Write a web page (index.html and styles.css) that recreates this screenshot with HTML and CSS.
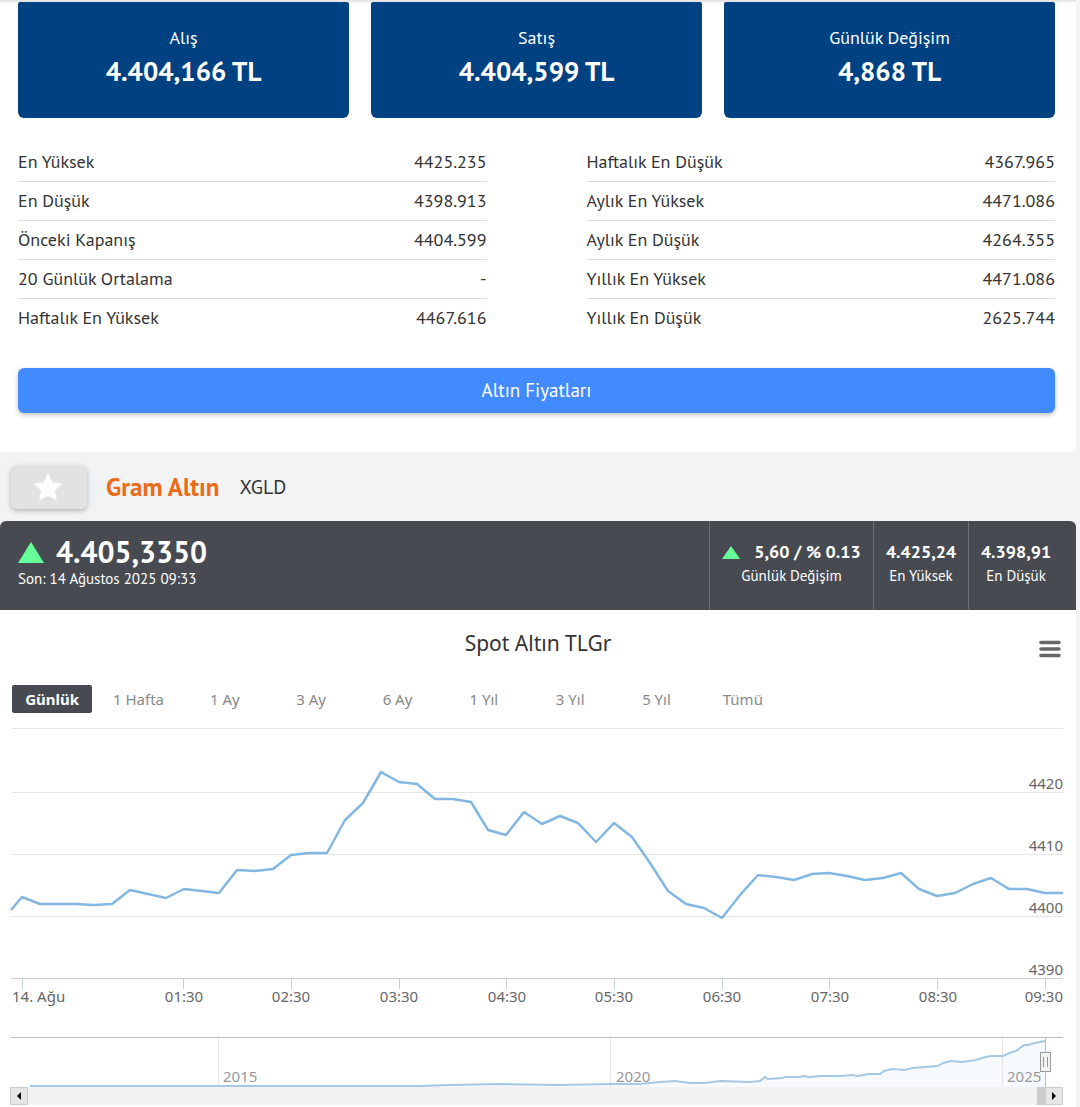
FILE: index.html
```html
<!DOCTYPE html>
<html lang="tr">
<head>
    <meta charset="UTF-8">
    <meta name="viewport" content="width=device-width, initial-scale=1.0">
    <title>Gram Altın</title>
    <link rel="stylesheet" href="styles.css">
</head>
<body>
    <section class="summary">
        <div class="cards">
            <div class="card">
                <span class="card-label">Alış</span>
                <strong class="card-value">4.404,166 TL</strong>
            </div>
            <div class="card">
                <span class="card-label">Satış</span>
                <strong class="card-value">4.404,599 TL</strong>
            </div>
            <div class="card">
                <span class="card-label">Günlük Değişim</span>
                <strong class="card-value">4,868 TL</strong>
            </div>
        </div>

        <div class="stats">
            <table class="stats-table">
                <tr><th scope="row">En Yüksek</th><td>4425.235</td></tr>
                <tr><th scope="row">En Düşük</th><td>4398.913</td></tr>
                <tr><th scope="row">Önceki Kapanış</th><td>4404.599</td></tr>
                <tr><th scope="row">20 Günlük Ortalama</th><td>-</td></tr>
                <tr><th scope="row">Haftalık En Yüksek</th><td>4467.616</td></tr>
            </table>
            <table class="stats-table">
                <tr><th scope="row">Haftalık En Düşük</th><td>4367.965</td></tr>
                <tr><th scope="row">Aylık En Yüksek</th><td>4471.086</td></tr>
                <tr><th scope="row">Aylık En Düşük</th><td>4264.355</td></tr>
                <tr><th scope="row">Yıllık En Yüksek</th><td>4471.086</td></tr>
                <tr><th scope="row">Yıllık En Düşük</th><td>2625.744</td></tr>
            </table>
        </div>

        <a class="prices-link" href="#">Altın Fiyatları</a>
    </section>

    <header class="symbol">
        <button class="favorite" type="button" aria-label="Favorilere ekle">
            <svg width="30" height="28" viewBox="0 0 30 28">
                <path d="M14 0l4.3 9.2 9.9 1.3-7.3 6.9 1.9 9.9-8.8-4.9-8.8 4.9 1.9-9.9-7.3-6.9 9.9-1.3z" fill="#fff"/>
            </svg>
        </button>
        <h1 class="symbol-name">Gram Altın</h1>
        <span class="symbol-code">XGLD</span>
    </header>

    <section class="quote">
        <div class="quote-main">
            <div class="quote-price">
                <svg class="arrow-up" width="26" height="21" viewBox="0 0 26 21"><path d="M13 0l13 21H0z"/></svg>
                <strong>4.405,3350</strong>
            </div>
            <span class="quote-time">Son: 14 Ağustos 2025 09:33</span>
        </div>
        <div class="quote-cell quote-change">
            <div class="quote-row">
                <svg class="arrow-up" width="18" height="13" viewBox="0 0 18 13"><path d="M9 0l9 13H0z"/></svg>
                <strong>5,60 / % 0.13</strong>
            </div>
            <span>Günlük Değişim</span>
        </div>
        <div class="quote-cell">
            <strong>4.425,24</strong>
            <span>En Yüksek</span>
        </div>
        <div class="quote-cell">
            <strong>4.398,91</strong>
            <span>En Düşük</span>
        </div>
    </section>

    <section class="chart">
        <h2 class="chart-title">Spot Altın TLGr</h2>
        <button class="chart-menu" type="button" aria-label="Grafik menüsü">
            <svg width="22" height="18" viewBox="0 0 22 18">
                <path d="M2 2.5h18M2 9h18M2 15.5h18" stroke="#666" stroke-width="3.6" stroke-linecap="round"/>
            </svg>
        </button>

        <div class="ranges">
            <button class="range active" type="button">Günlük</button>
            <button class="range" type="button">1 Hafta</button>
            <button class="range" type="button">1 Ay</button>
            <button class="range" type="button">3 Ay</button>
            <button class="range" type="button">6 Ay</button>
            <button class="range" type="button">1 Yıl</button>
            <button class="range" type="button">3 Yıl</button>
            <button class="range" type="button">5 Yıl</button>
            <button class="range" type="button">Tümü</button>
        </div>

        <svg class="plot" viewBox="0 0 1076 367">
            <path class="grid" d="M11 8.5H1063M11 72.5H1063M11 134.5H1063M11 196.5H1063"/>
            <path class="axis" d="M11 258.5H1063M22.5 258v11M183.5 258v11M291.5 258v11M399.5 258v11M506.5 258v11M614.5 258v11M722.5 258v11M829.5 258v11M937.5 258v11M1045.5 258v11"/>

            <polyline class="series" points="11,190 22,177 40,184 58,184 76,184 94,185 112,184 130,170 148,174 166,178 184,169 202,171 219,173 237,150 255,151 273,149 291,135 309,133 327,133 345,100 363,83 381,52 399,62 417,64 435,79 453,79 471,82 488,110 506,115 524,92 542,104 560,96 578,103 596,122 614,103 632,117 650,143 668,171 686,184 704,188 722,198 740,175 758,155 776,157 794,160 812,154 829,153 847,156 865,160 883,158 901,153 919,169 937,176 955,173 973,164 991,158 1009,169 1027,169 1045,173 1063,173"/>

            <g class="label label-end">
                <text x="1063" y="69">4420</text>
                <text x="1063" y="131">4410</text>
                <text x="1063" y="193">4400</text>
                <text x="1063" y="255">4390</text>
                <text x="1063" y="282">09:30</text>
            </g>
            <text class="label" x="12" y="282">14. Ağu</text>
            <g class="label label-middle">
                <text x="184" y="282">01:30</text>
                <text x="291" y="282">02:30</text>
                <text x="399" y="282">03:30</text>
                <text x="507" y="282">04:30</text>
                <text x="614" y="282">05:30</text>
                <text x="722" y="282">06:30</text>
                <text x="830" y="282">07:30</text>
                <text x="938" y="282">08:30</text>
            </g>

            <!-- navigator -->
            <path class="nav-area" d="M30 366L360 366 500 365 612 364 640 364 675 361 705 363 720 362 750 362 760 361 765 358 785 358 803 356 840 356 880 354 892 349 905 350 938 345 951 341 962 342 990 336 1003 336 1024 325 1035 323 1045 321V367H30z"/>
            <path class="nav-grid" d="M218.5 318v49M610.5 318v49M1002.5 318v49"/>
            <polyline class="nav-series" points="30,366 120,366 210,366 300,366 420,366 450,365 500,364 560,365 612,364 640,364 660,362 675,361 690,363 705,363 720,361 750,362 760,361 765,357 768,359 782,358 785,357 800,357 803,356 810,357 820,356 840,356 852,355 858,356 869,354 880,354 884,351 892,349 905,350 912,348 938,346 943,343 951,341 962,342 976,340 982,338 990,336 1003,336 1012,332 1016,331 1024,325 1028,325 1035,323 1045,321"/>
            <path class="nav-outline" d="M11 317.5H1063M1045.5 317v50"/>
            <g class="label nav-label">
                <text x="223" y="362">2015</text>
                <text x="616" y="362">2020</text>
                <text x="1007" y="362">2025</text>
            </g>
            <rect class="nav-handle" x="1040.5" y="332.5" width="10" height="19"/>
            <path class="nav-grip" d="M1043.5 337v10M1047.5 337v10"/>
        </svg>

        <div class="scrollbar">
            <button class="scroll-button" type="button" aria-label="Geri">
                <svg width="4" height="8" viewBox="0 0 4 8"><path d="M4 0v8L0 4z"/></svg>
            </button>
            <div class="scroll-track"><div class="scroll-thumb"></div></div>
            <button class="scroll-button" type="button" aria-label="İleri">
                <svg width="4" height="8" viewBox="0 0 4 8"><path d="M0 0v8l4-4z"/></svg>
            </button>
        </div>
    </section>
</body>
</html>
```

FILE: styles.css
```css
* {
    box-sizing: border-box;
}
body {
    margin: 0;
    padding-right: 4px;
    background-color: #f2f3f5;
    font-family: "PT Sans", Lato, sans-serif;
    color: #333;
}
button {
    border: none;
    padding: 0;
    font-family: inherit;
    cursor: pointer;
}

/* Price summary */
.summary {
    background-color: white;
    border-top: 2px solid #e6e6e6;
    border-radius: 0 0 6px 0;
    padding: 0 21px 39px 18px;
}
.cards {
    display: flex;
    gap: 22px;
}
.card {
    flex: 1;
    display: flex;
    flex-direction: column;
    align-items: center;
    height: 116px;
    padding-top: 24px;
    background-color: #004182;
    border-radius: 2px 2px 6px 6px;
    color: white;
}
.card-label {
    font-size: 18px;
    line-height: 24px;
}
.card-value {
    font-size: 27px;
    line-height: 42px;
}
.stats {
    display: flex;
    gap: 100px;
    margin-top: 24px;
}
.stats-table {
    flex: 1;
    border-collapse: collapse;
    font-size: 18px;
}
.stats-table th,
.stats-table td {
    height: 39px;
    padding: 0;
    border-bottom: 1px solid #ddd;
    font-weight: normal;
    text-align: left;
}
.stats-table td {
    text-align: right;
}
.stats-table tr:last-child > * {
    border-bottom: none;
}
.prices-link {
    display: block;
    margin-top: 31px;
    background-color: #428bff;
    border-radius: 6px;
    box-shadow: 0 2px 5px rgba(0, 0, 0, 0.25);
    color: white;
    font-size: 19px;
    line-height: 45px;
    text-align: center;
    text-decoration: none;
}

/* Symbol heading */
.symbol {
    display: flex;
    align-items: center;
    height: 69px;
    padding-left: 11px;
}
.favorite {
    display: flex;
    align-items: center;
    justify-content: center;
    width: 76px;
    height: 44px;
    background-color: #e2e2e2;
    border-radius: 6px;
    box-shadow: 0 2px 5px rgba(0, 0, 0, 0.25);
}
.symbol-name {
    margin: 0 20px 0 19px;
    color: #eb6b18;
    font-size: 25px;
}
.symbol-code {
    font-size: 20px;
}

/* Quote bar */
.quote {
    display: flex;
    height: 89px;
    padding-right: 13px;
    background-color: #474b51;
    border-radius: 6px 6px 0 0;
    color: white;
    font-size: 15px;
}
.quote-main {
    flex: 1;
    padding: 14px 0 0 18px;
}
.quote-price {
    display: flex;
    align-items: center;
    gap: 12px;
    font-size: 30px;
    line-height: 34px;
}
.quote-time {
    line-height: 20px;
}
.quote-cell {
    display: flex;
    flex-direction: column;
    align-items: center;
    width: 95px;
    padding-top: 19px;
    border-left: 1px solid #6c7075;
    line-height: 24px;
}
.quote-cell strong {
    font-size: 18px;
}
.quote-change {
    width: 164px;
}
.quote-row {
    display: flex;
    align-items: center;
    gap: 14px;
}
.arrow-up {
    fill: #66ff99;
}

/* Chart */
.chart {
    position: relative;
    background-color: white;
    padding: 18px 0 2px;
    font-family: "Lucida Grande", "Noto Sans", sans-serif;
}
.chart-title {
    margin: 0;
    font-size: 21px;
    font-weight: normal;
    line-height: 30px;
    text-align: center;
}
.chart-menu {
    position: absolute;
    top: 30px;
    right: 15px;
    height: 18px;
    background: none;
}
.ranges {
    display: grid;
    grid-template-columns: repeat(9, 1fr);
    gap: 6px;
    max-width: 783px;
    margin-top: 27px;
    padding: 0 0 0 12px;
}
.range {
    height: 28px;
    background: none;
    border-radius: 2px;
    color: #888;
    font-size: 15px;
}
.range.active {
    background-color: #474b51;
    color: white;
    font-weight: bold;
}
.plot {
    display: block;
    width: 100%;
    margin-top: 7px;
}
.grid,
.axis,
.nav-grid,
.nav-outline {
    fill: none;
    stroke: #e6e6e6;
}
.axis {
    stroke: #c5cdda;
}
.nav-outline {
    stroke: #bbb;
}
.series {
    fill: none;
    stroke: #83b7e2;
    stroke-width: 2.5;
    stroke-linejoin: round;
}
.nav-series {
    fill: none;
    stroke: #a5c8e3;
    stroke-width: 2;
}
.nav-area {
    fill: #f6fafe;
}
.label {
    fill: #666;
    font-size: 15px;
}
.label-end {
    text-anchor: end;
}
.label-middle {
    text-anchor: middle;
}
.nav-label {
    fill: #999;
}
.nav-handle {
    fill: #f2f2f2;
    stroke: #999;
}
.nav-grip {
    stroke: #999;
}
.scrollbar {
    display: flex;
    height: 18px;
    margin: 0 13px 0 10px;
}
.scroll-button {
    display: flex;
    align-items: center;
    justify-content: center;
    width: 18px;
    background-color: #e6e6e6;
    border: 1px solid #ccc;
}
.scroll-track {
    flex: 1;
    background-color: #f2f2f2;
}
.scroll-thumb {
    width: 8px;
    height: 100%;
    margin-left: auto;
    background-color: #ccc;
}
```
